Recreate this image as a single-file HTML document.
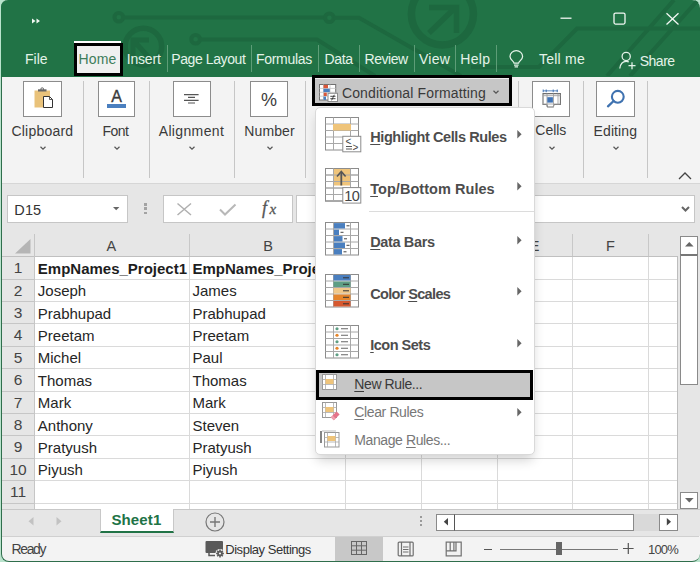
<!DOCTYPE html>
<html><head><meta charset="utf-8"><style>
html,body{margin:0;padding:0;}
body{width:700px;height:562px;overflow:hidden;position:relative;background:#b9e3cc;font-family:"Liberation Sans", sans-serif;}
.t{position:absolute;white-space:pre;font-family:"Liberation Sans", sans-serif;}
.b{position:absolute;box-sizing:border-box;}
svg.b{overflow:visible;}
</style></head><body>
<div class="b" style="left:1px;top:0px;width:699px;height:562px;background:#f3f3f3;border-radius:7px 8px 8px 8px;border-left:1px solid #2f6e4c;border-bottom:1.5px solid #2f6e4c;"></div>
<div class="b" style="left:1px;top:0px;width:699px;height:76.5px;background:#217346;border-radius:7px 8px 0 0;overflow:hidden;"></div>
<svg class="b" style="left:1px;top:0px;overflow:hidden;border-top-right-radius:7px;" width="699" height="76" viewBox="0 0 699 76">
<g fill="none" stroke="#1d683f" stroke-width="4" stroke-linecap="butt">
<circle cx="117.8" cy="17.3" r="4.3"/>
<path d="M122 17.5 H324"/>
<circle cx="328.4" cy="17.8" r="4.3"/>
<path d="M332.6 17.8 H358 L460 76"/>
<circle cx="194.6" cy="39.3" r="4.3"/>
<path d="M198.8 39.5 H316 L374 76"/>
<circle cx="142.4" cy="46.6" r="18.3" stroke-width="5.5"/>
<path d="M151 61 L133 41 M132 56 V40 H148" stroke-width="5"/>
<circle cx="441.4" cy="14" r="31" stroke-width="7.5"/>
<path d="M428 33 L455 7 M428 7.5 H455.5 V33" stroke-width="5.5"/>
<path d="M470 67 H538 L576 28.5 H699 M606 76 L673 0 M629 76 L697 0" />
</g>
</svg>
<svg class="b" style="left:555px;top:10px;" width="140" height="20" viewBox="0 0 140 20">
<g fill="none" stroke="#f2f7f3" stroke-width="1.3">
<path d="M5.5 8.2 H16.5"/>
<rect x="59" y="3.1" width="11" height="11" rx="1.5"/>
<path d="M111.5 3.2 L123.5 14.5 M123.5 3.2 L111.5 14.5"/>
</g></svg>
<svg class="b" style="left:30px;top:17px;" width="12" height="8" viewBox="0 0 12 8"><path d="M2 1.5 L5.5 4 L2 6.5Z M6.5 1.5 L10 4 L6.5 6.5Z" fill="#f2f7f3"/></svg>
<div class="t" style="left:25.00px;top:51.95px;font-size:14px;line-height:14px;color:#e4f3e9;font-weight:400;letter-spacing:-0.016px;">File</div>
<div class="b" style="left:74px;top:41px;width:47px;height:1.6px;background:#ffffff;"></div>
<div class="b" style="left:74px;top:43px;width:48.7px;height:33px;background:#f0f0f0;border:3px solid #000;"></div>
<div class="t" style="left:78.50px;top:51.95px;font-size:14px;line-height:14px;color:#3e7d5b;font-weight:400;letter-spacing:0.160px;">Home</div>
<div class="t" style="left:126.80px;top:51.95px;font-size:14px;line-height:14px;color:#e4f3e9;font-weight:400;letter-spacing:-0.203px;">Insert</div>
<div class="b" style="left:166.6px;top:45px;width:1px;height:27px;background:#5d9d77;"></div>
<div class="b" style="left:250.6px;top:45px;width:1px;height:27px;background:#5d9d77;"></div>
<div class="b" style="left:318px;top:45px;width:1px;height:27px;background:#5d9d77;"></div>
<div class="b" style="left:359.2px;top:45px;width:1px;height:27px;background:#5d9d77;"></div>
<div class="b" style="left:414px;top:45px;width:1px;height:27px;background:#5d9d77;"></div>
<div class="b" style="left:454.9px;top:45px;width:1px;height:27px;background:#5d9d77;"></div>
<div class="b" style="left:495.7px;top:45px;width:1px;height:27px;background:#5d9d77;"></div>
<div class="t" style="left:171.20px;top:51.95px;font-size:14px;line-height:14px;color:#e4f3e9;font-weight:400;letter-spacing:-0.393px;">Page Layout</div>
<div class="t" style="left:256.00px;top:51.95px;font-size:14px;line-height:14px;color:#e4f3e9;font-weight:400;letter-spacing:-0.295px;">Formulas</div>
<div class="t" style="left:324.50px;top:51.95px;font-size:14px;line-height:14px;color:#e4f3e9;font-weight:400;letter-spacing:-0.320px;">Data</div>
<div class="t" style="left:364.60px;top:51.95px;font-size:14px;line-height:14px;color:#e4f3e9;font-weight:400;letter-spacing:-0.484px;">Review</div>
<div class="t" style="left:419.00px;top:51.95px;font-size:14px;line-height:14px;color:#e4f3e9;font-weight:400;letter-spacing:0.227px;">View</div>
<div class="t" style="left:460.30px;top:51.95px;font-size:14px;line-height:14px;color:#e4f3e9;font-weight:400;letter-spacing:0.301px;">Help</div>
<svg class="b" style="left:509px;top:50px;" width="16" height="20" viewBox="0 0 16 20"><g fill="none" stroke="#e4f3e9" stroke-width="1.25">
<path d="M5 13 C4.6 11 1 9.5 1 6.5 C1 3.2 3.8 0.7 7.3 0.7 C10.8 0.7 13.6 3.2 13.6 6.5 C13.6 9.5 10 11 9.6 13 Z"/>
<path d="M5 15 H9.6 M5.6 16.8 H9"/></g></svg>
<div class="t" style="left:539.00px;top:51.95px;font-size:14px;line-height:14px;color:#e4f3e9;font-weight:400;letter-spacing:0.234px;">Tell me</div>
<svg class="b" style="left:619px;top:51px;" width="20" height="20" viewBox="0 0 20 20"><g fill="none" stroke="#e4f3e9" stroke-width="1.25">
<circle cx="7.2" cy="5.4" r="4.1"/>
<path d="M0.8 17.5 C1.3 13 3.6 10.3 7.2 10.3 C8.2 10.3 9 10.5 9.8 10.8"/>
<path d="M13 11.2 V18.2 M9.5 14.7 H16.5"/></g></svg>
<div class="t" style="left:639.70px;top:53.65px;font-size:14px;line-height:14px;color:#e4f3e9;font-weight:400;letter-spacing:-0.472px;">Share</div>
<div class="b" style="left:1px;top:76.5px;width:699px;height:106.5px;background:#f3f3f3;border-left:1px solid #2f6e4c;"></div>
<div class="b" style="left:2px;top:182.6px;width:698px;height:1px;background:#d6d6d6;"></div>
<div class="b" style="left:83.3px;top:81px;width:1px;height:97px;background:#c6c6c6;"></div>
<div class="b" style="left:148.9px;top:81px;width:1px;height:97px;background:#c6c6c6;"></div>
<div class="b" style="left:233.6px;top:81px;width:1px;height:97px;background:#c6c6c6;"></div>
<div class="b" style="left:304.6px;top:81px;width:1px;height:97px;background:#c6c6c6;"></div>
<div class="b" style="left:518.2px;top:81px;width:1px;height:97px;background:#c6c6c6;"></div>
<div class="b" style="left:582.8px;top:81px;width:1px;height:97px;background:#c6c6c6;"></div>
<div class="b" style="left:647.2px;top:81px;width:1px;height:97px;background:#c6c6c6;"></div>
<div class="b" style="left:23.3px;top:81.2px;width:38.6px;height:35.6px;background:#ffffff;border:1px solid #8c8c8c;"></div>
<div class="b" style="left:98px;top:81.2px;width:37.3px;height:35.6px;background:#ffffff;border:1px solid #8c8c8c;"></div>
<div class="b" style="left:173px;top:81.2px;width:37.9px;height:35.6px;background:#ffffff;border:1px solid #8c8c8c;"></div>
<div class="b" style="left:250.3px;top:81.2px;width:38.2px;height:35.6px;background:#ffffff;border:1px solid #8c8c8c;"></div>
<div class="b" style="left:532.3px;top:81.2px;width:37.9px;height:35.6px;background:#ffffff;border:1px solid #8c8c8c;"></div>
<div class="b" style="left:596.3px;top:81.2px;width:38.5px;height:35.6px;background:#ffffff;border:1px solid #8c8c8c;"></div>
<div class="t" style="left:11.40px;top:123.85px;font-size:14px;line-height:14px;color:#3a3a3a;font-weight:400;letter-spacing:0.229px;">Clipboard</div>
<div class="t" style="left:102.50px;top:123.85px;font-size:14px;line-height:14px;color:#3a3a3a;font-weight:400;letter-spacing:-0.504px;">Font</div>
<div class="t" style="left:158.70px;top:123.85px;font-size:14px;line-height:14px;color:#3a3a3a;font-weight:400;letter-spacing:0.359px;">Alignment</div>
<div class="t" style="left:244.30px;top:123.85px;font-size:14px;line-height:14px;color:#3a3a3a;font-weight:400;letter-spacing:0.117px;">Number</div>
<div class="t" style="left:535.30px;top:123.15px;font-size:14px;line-height:14px;color:#3a3a3a;font-weight:400;letter-spacing:-0.025px;">Cells</div>
<div class="t" style="left:593.60px;top:123.85px;font-size:14px;line-height:14px;color:#3a3a3a;font-weight:400;letter-spacing:0.098px;">Editing</div>
<svg class="b" style="left:40.0px;top:146px;" width="6" height="4" viewBox="0 0 6 4"><path d="M0.5 0.8 L3.0 3.2 L5.5 0.8" fill="none" stroke="#555" stroke-width="1.2"/></svg>
<svg class="b" style="left:114.0px;top:146px;" width="6" height="4" viewBox="0 0 6 4"><path d="M0.5 0.8 L3.0 3.2 L5.5 0.8" fill="none" stroke="#555" stroke-width="1.2"/></svg>
<svg class="b" style="left:188.5px;top:146px;" width="6" height="4" viewBox="0 0 6 4"><path d="M0.5 0.8 L3.0 3.2 L5.5 0.8" fill="none" stroke="#555" stroke-width="1.2"/></svg>
<svg class="b" style="left:266.5px;top:146px;" width="6" height="4" viewBox="0 0 6 4"><path d="M0.5 0.8 L3.0 3.2 L5.5 0.8" fill="none" stroke="#555" stroke-width="1.2"/></svg>
<svg class="b" style="left:548.5px;top:146px;" width="6" height="4" viewBox="0 0 6 4"><path d="M0.5 0.8 L3.0 3.2 L5.5 0.8" fill="none" stroke="#555" stroke-width="1.2"/></svg>
<svg class="b" style="left:612.5px;top:146px;" width="6" height="4" viewBox="0 0 6 4"><path d="M0.5 0.8 L3.0 3.2 L5.5 0.8" fill="none" stroke="#555" stroke-width="1.2"/></svg>
<svg class="b" style="left:678px;top:172px;" width="14" height="8" viewBox="0 0 14 8"><path d="M1 7 L7 1 L13 7" fill="none" stroke="#444" stroke-width="1.3"/></svg>
<svg class="b" style="left:33px;top:87px;" width="22" height="22" viewBox="0 0 22 22">
<path d="M1.5 3.5 H17 V20.5 H1.5 Z" fill="#e9c27a"/>
<path d="M5 2.3 H13.5 V4.5 H5Z" fill="#666"/>
<circle cx="9.2" cy="2.2" r="1.4" fill="none" stroke="#666" stroke-width="1"/>
<path d="M10.5 9.5 H16.5 L19.5 12.5 V20.5 H10.5 Z" fill="#fff" stroke="#333" stroke-width="1"/>
<path d="M16.5 9.5 V12.5 H19.5" fill="none" stroke="#333" stroke-width="0.8"/>
</svg>
<div class="t" style="left:111.20px;top:88.66px;font-size:16px;line-height:16px;color:#3a3a3a;font-weight:400;letter-spacing:0.828px;-webkit-text-stroke:0.35px #3a3a3a;">A</div>
<div class="b" style="left:107px;top:103.8px;width:19px;height:3.8px;background:#4a7fbf;"></div>
<svg class="b" style="left:184px;top:93px;" width="15" height="12" viewBox="0 0 15 12"><g stroke="#555" stroke-width="1.2"><path d="M0 1.6 H14.6 M4 4.4 H11 M0 7.3 H14.6 M4 10 H11"/></g></svg>
<div class="t" style="left:261.00px;top:90.76px;font-size:18px;line-height:18px;color:#3c3c3c;font-weight:400;letter-spacing:-0.516px;">%</div>
<svg class="b" style="left:541.5px;top:88px;" width="20" height="22" viewBox="0 0 20 22">
<path d="M1.2 2.8 H15.8" stroke="#4a7fbf" stroke-width="1.2" opacity="0.75"/>
<path d="M1.2 1.5 V4.2 M4.2 1.5 V4.2 M11.2 1.5 V4.2 M15.2 1.5 V4.2" stroke="#3d6fae" stroke-width="1"/>
<g fill="none" stroke="#6e6e6e" stroke-width="1.1">
<path d="M1 5.6 H18.4 V16.5 H12 L11.3 19 H5.6 L4.8 16.5 H1 Z"/>
</g>
<g fill="none" stroke="#a0a0a0" stroke-width="0.9">
<path d="M1 7.7 H18.4 M1 16 H18.4 M5 5.6 V19 M11.5 5.6 V19 M16 5.6 V16.5"/>
</g>
<rect x="5.3" y="9.2" width="5.6" height="5.4" fill="#3f73b5"/>
</svg>
<svg class="b" style="left:605px;top:87px;" width="22" height="22" viewBox="0 0 22 22">
<g fill="none" stroke="#3f72b0" stroke-width="2.1">
<circle cx="12.8" cy="9.8" r="5.9"/>
<path d="M8.6 14 L3 19.3" stroke-linecap="round" stroke-width="2.3"/>
</g></svg>
<div class="b" style="left:312px;top:75.2px;width:199.8px;height:30.8px;background:#c6c6c6;border:3px solid #000;"></div>
<div class="b" style="left:315px;top:78.2px;width:193.8px;height:1.3px;background:#ececec;"></div>
<div class="t" style="left:341.90px;top:85.75px;font-size:14px;line-height:14px;color:#3a3a3a;font-weight:400;letter-spacing:0.143px;">Conditional Formatting</div>
<svg class="b" style="left:493.0px;top:90.3px;" width="6" height="4" viewBox="0 0 6 4"><path d="M0.5 0.8 L3.0 3.2 L5.5 0.8" fill="none" stroke="#555" stroke-width="1.2"/></svg>
<svg class="b" style="left:319px;top:84px;" width="20" height="18" viewBox="0 0 20 18">
<rect x="0.5" y="0.5" width="16.2" height="15.5" fill="#fff" stroke="#707070" stroke-width="1"/>
<path d="M0.5 4.4 H16.7 M0.5 8.3 H16.7 M0.5 12.2 H16.7 M4.5 0.5 V16 M11 0.5 V16" stroke="#c4c4c4" stroke-width="0.8"/>
<rect x="4.5" y="0.9" width="4.5" height="3.3" fill="#d9583b"/>
<rect x="4.5" y="4.8" width="6.3" height="3.3" fill="#4a7fbf"/>
<rect x="4.8" y="8.7" width="3" height="3.3" fill="#d9583b"/>
<rect x="4.5" y="12.6" width="2.5" height="3.3" fill="#4a7fbf"/>
<rect x="9" y="9.3" width="9.5" height="8.2" fill="#fff" stroke="#8c8c8c" stroke-width="1"/>
<path d="M11.3 12.3 H16.5 M11.3 14.7 H16.5 M15.3 10.8 L12.6 16.3" stroke="#333" stroke-width="0.9"/>
</svg>
<div class="b" style="left:2px;top:183.6px;width:698px;height:52px;background:#e6e6e6;"></div>
<div class="b" style="left:7px;top:195px;width:120.5px;height:27.8px;background:#ffffff;border:1px solid #c6c6c6;"></div>
<div class="t" style="left:14.30px;top:203.13px;font-size:14.5px;line-height:14.5px;color:#333;font-weight:400;letter-spacing:0.130px;">D15</div>
<svg class="b" style="left:112.5px;top:207px;" width="7" height="4" viewBox="0 0 7 4"><path d="M0 0 H6.4 L3.2 3.2Z" fill="#666"/></svg>
<div class="b" style="left:144.2px;top:202.8px;width:3px;height:2.8px;background:#a3a3a3;"></div>
<div class="b" style="left:144.2px;top:207.2px;width:3px;height:2.8px;background:#a3a3a3;"></div>
<div class="b" style="left:144.2px;top:211.6px;width:3px;height:2.8px;background:#a3a3a3;"></div>
<div class="b" style="left:163.2px;top:195.2px;width:129.5px;height:27.8px;background:#ffffff;border:1px solid #c6c6c6;"></div>
<svg class="b" style="left:176px;top:202px;" width="17" height="14" viewBox="0 0 17 14"><path d="M1.5 1.5 L15 13 M15 1.5 L1.5 13" stroke="#b0b0b0" stroke-width="1.5" fill="none"/></svg>
<svg class="b" style="left:219px;top:203px;" width="18" height="13" viewBox="0 0 18 13"><path d="M1 6.5 L6 11.5 L16.5 1.5" stroke="#b8b8b8" stroke-width="2" fill="none"/></svg>
<div class="t" style="left:262.00px;top:199.06px;font-size:18px;line-height:18px;color:#555;font-weight:400;font-family:Liberation Serif, serif;font-style:italic;-webkit-text-stroke:0.3px #555;">f<span style="font-size:15px;margin-left:2.5px">x</span></div>
<div class="b" style="left:296px;top:195.4px;width:399px;height:27.6px;background:#ffffff;border:1px solid #c6c6c6;"></div>
<svg class="b" style="left:681px;top:206px;" width="9" height="6" viewBox="0 0 9 6"><path d="M1 1 L4.5 4.5 L8 1" stroke="#666" stroke-width="2" fill="none"/></svg>
<div class="b" style="left:2px;top:235px;width:678px;height:274px;background:#e6e6e6;"></div>
<div class="b" style="left:34.3px;top:256.4px;width:643.1px;height:253.2px;background:#ffffff;"></div>
<div class="b" style="left:2px;top:278.59999999999997px;width:32.3px;height:1px;background:#c6c6c6;"></div>
<div class="b" style="left:34.3px;top:278.59999999999997px;width:643.1px;height:1px;background:#dadada;"></div>
<div class="b" style="left:2px;top:301.0px;width:32.3px;height:1px;background:#c6c6c6;"></div>
<div class="b" style="left:34.3px;top:301.0px;width:643.1px;height:1px;background:#dadada;"></div>
<div class="b" style="left:2px;top:323.4px;width:32.3px;height:1px;background:#c6c6c6;"></div>
<div class="b" style="left:34.3px;top:323.4px;width:643.1px;height:1px;background:#dadada;"></div>
<div class="b" style="left:2px;top:345.79999999999995px;width:32.3px;height:1px;background:#c6c6c6;"></div>
<div class="b" style="left:34.3px;top:345.79999999999995px;width:643.1px;height:1px;background:#dadada;"></div>
<div class="b" style="left:2px;top:368.2px;width:32.3px;height:1px;background:#c6c6c6;"></div>
<div class="b" style="left:34.3px;top:368.2px;width:643.1px;height:1px;background:#dadada;"></div>
<div class="b" style="left:2px;top:390.59999999999997px;width:32.3px;height:1px;background:#c6c6c6;"></div>
<div class="b" style="left:34.3px;top:390.59999999999997px;width:643.1px;height:1px;background:#dadada;"></div>
<div class="b" style="left:2px;top:413.0px;width:32.3px;height:1px;background:#c6c6c6;"></div>
<div class="b" style="left:34.3px;top:413.0px;width:643.1px;height:1px;background:#dadada;"></div>
<div class="b" style="left:2px;top:435.4px;width:32.3px;height:1px;background:#c6c6c6;"></div>
<div class="b" style="left:34.3px;top:435.4px;width:643.1px;height:1px;background:#dadada;"></div>
<div class="b" style="left:2px;top:457.79999999999995px;width:32.3px;height:1px;background:#c6c6c6;"></div>
<div class="b" style="left:34.3px;top:457.79999999999995px;width:643.1px;height:1px;background:#dadada;"></div>
<div class="b" style="left:2px;top:480.2px;width:32.3px;height:1px;background:#c6c6c6;"></div>
<div class="b" style="left:34.3px;top:480.2px;width:643.1px;height:1px;background:#dadada;"></div>
<div class="b" style="left:2px;top:502.59999999999997px;width:32.3px;height:1px;background:#c6c6c6;"></div>
<div class="b" style="left:34.3px;top:502.59999999999997px;width:643.1px;height:1px;background:#dadada;"></div>
<div class="b" style="left:2px;top:525.0px;width:32.3px;height:1px;background:#c6c6c6;"></div>
<div class="b" style="left:34.3px;top:525.0px;width:643.1px;height:1px;background:#dadada;"></div>
<div class="b" style="left:188.6px;top:256.4px;width:1px;height:253.2px;background:#dadada;"></div>
<div class="b" style="left:344.6px;top:256.4px;width:1px;height:253.2px;background:#dadada;"></div>
<div class="b" style="left:420.6px;top:256.4px;width:1px;height:253.2px;background:#dadada;"></div>
<div class="b" style="left:497px;top:256.4px;width:1px;height:253.2px;background:#dadada;"></div>
<div class="b" style="left:572.3px;top:256.4px;width:1px;height:253.2px;background:#dadada;"></div>
<div class="b" style="left:648.3px;top:256.4px;width:1px;height:253.2px;background:#dadada;"></div>
<div class="b" style="left:188.6px;top:234.2px;width:1px;height:22px;background:#c8c8c8;"></div>
<div class="b" style="left:344.6px;top:234.2px;width:1px;height:22px;background:#c8c8c8;"></div>
<div class="b" style="left:420.6px;top:234.2px;width:1px;height:22px;background:#c8c8c8;"></div>
<div class="b" style="left:497px;top:234.2px;width:1px;height:22px;background:#c8c8c8;"></div>
<div class="b" style="left:572.3px;top:234.2px;width:1px;height:22px;background:#c8c8c8;"></div>
<div class="b" style="left:648.3px;top:234.2px;width:1px;height:22px;background:#c8c8c8;"></div>
<div class="b" style="left:2px;top:256px;width:676px;height:1px;background:#c0c0c0;"></div>
<div class="b" style="left:34.3px;top:234.2px;width:1px;height:275px;background:#c6c6c6;"></div>
<div class="b" style="left:677px;top:256.4px;width:1px;height:253.2px;background:#bdbdbd;"></div>
<svg class="b" style="left:15px;top:238.5px;" width="16" height="15" viewBox="0 0 16 15"><path d="M15.5 0 V14.5 H0 Z" fill="#b5b5b5"/></svg>
<div class="t" style="left:34.3px;width:154.3px;text-align:center;top:238.53px;font-size:14.5px;line-height:14.5px;color:#444;">A</div>
<div class="t" style="left:190.2px;width:156.0px;text-align:center;top:238.53px;font-size:14.5px;line-height:14.5px;color:#444;">B</div>
<div class="t" style="left:344.6px;width:76.39999999999998px;text-align:center;top:238.53px;font-size:14.5px;line-height:14.5px;color:#444;">C</div>
<div class="t" style="left:421px;width:76px;text-align:center;top:238.53px;font-size:14.5px;line-height:14.5px;color:#444;">D</div>
<div class="t" style="left:497px;width:75.29999999999995px;text-align:center;top:238.53px;font-size:14.5px;line-height:14.5px;color:#444;">E</div>
<div class="t" style="left:572.3px;width:76.30000000000007px;text-align:center;top:238.53px;font-size:14.5px;line-height:14.5px;color:#444;">F</div>
<div class="t" style="left:2px;width:32px;text-align:center;top:260.28px;font-size:15.5px;line-height:15.5px;color:#444;">1</div>
<div class="t" style="left:2px;width:32px;text-align:center;top:282.68px;font-size:15.5px;line-height:15.5px;color:#444;">2</div>
<div class="t" style="left:2px;width:32px;text-align:center;top:305.08px;font-size:15.5px;line-height:15.5px;color:#444;">3</div>
<div class="t" style="left:2px;width:32px;text-align:center;top:327.48px;font-size:15.5px;line-height:15.5px;color:#444;">4</div>
<div class="t" style="left:2px;width:32px;text-align:center;top:349.88px;font-size:15.5px;line-height:15.5px;color:#444;">5</div>
<div class="t" style="left:2px;width:32px;text-align:center;top:372.28px;font-size:15.5px;line-height:15.5px;color:#444;">6</div>
<div class="t" style="left:2px;width:32px;text-align:center;top:394.68px;font-size:15.5px;line-height:15.5px;color:#444;">7</div>
<div class="t" style="left:2px;width:32px;text-align:center;top:417.08px;font-size:15.5px;line-height:15.5px;color:#444;">8</div>
<div class="t" style="left:2px;width:32px;text-align:center;top:439.48px;font-size:15.5px;line-height:15.5px;color:#444;">9</div>
<div class="t" style="left:2px;width:32px;text-align:center;top:461.88px;font-size:15.5px;line-height:15.5px;color:#444;">10</div>
<div class="t" style="left:2px;width:32px;text-align:center;top:484.28px;font-size:15.5px;line-height:15.5px;color:#444;">11</div>
<div class="t" style="left:37.80px;top:260.70px;font-size:15px;line-height:15px;color:#1e1e1e;font-weight:400;"><b>EmpNames_Project1</b></div>
<div class="t" style="left:192.50px;top:260.70px;font-size:15px;line-height:15px;color:#1e1e1e;font-weight:400;"><b>EmpNames_Project2</b></div>
<div class="t" style="left:37.80px;top:283.10px;font-size:15px;line-height:15px;color:#262626;font-weight:400;">Joseph</div>
<div class="t" style="left:192.50px;top:283.10px;font-size:15px;line-height:15px;color:#262626;font-weight:400;">James</div>
<div class="t" style="left:37.80px;top:305.50px;font-size:15px;line-height:15px;color:#262626;font-weight:400;">Prabhupad</div>
<div class="t" style="left:192.50px;top:305.50px;font-size:15px;line-height:15px;color:#262626;font-weight:400;">Prabhupad</div>
<div class="t" style="left:37.80px;top:327.90px;font-size:15px;line-height:15px;color:#262626;font-weight:400;">Preetam</div>
<div class="t" style="left:192.50px;top:327.90px;font-size:15px;line-height:15px;color:#262626;font-weight:400;">Preetam</div>
<div class="t" style="left:37.80px;top:350.30px;font-size:15px;line-height:15px;color:#262626;font-weight:400;">Michel</div>
<div class="t" style="left:192.50px;top:350.30px;font-size:15px;line-height:15px;color:#262626;font-weight:400;">Paul</div>
<div class="t" style="left:37.80px;top:372.70px;font-size:15px;line-height:15px;color:#262626;font-weight:400;">Thomas</div>
<div class="t" style="left:192.50px;top:372.70px;font-size:15px;line-height:15px;color:#262626;font-weight:400;">Thomas</div>
<div class="t" style="left:37.80px;top:395.10px;font-size:15px;line-height:15px;color:#262626;font-weight:400;">Mark</div>
<div class="t" style="left:192.50px;top:395.10px;font-size:15px;line-height:15px;color:#262626;font-weight:400;">Mark</div>
<div class="t" style="left:37.80px;top:417.50px;font-size:15px;line-height:15px;color:#262626;font-weight:400;">Anthony</div>
<div class="t" style="left:192.50px;top:417.50px;font-size:15px;line-height:15px;color:#262626;font-weight:400;">Steven</div>
<div class="t" style="left:37.80px;top:439.90px;font-size:15px;line-height:15px;color:#262626;font-weight:400;">Pratyush</div>
<div class="t" style="left:192.50px;top:439.90px;font-size:15px;line-height:15px;color:#262626;font-weight:400;">Pratyush</div>
<div class="t" style="left:37.80px;top:462.30px;font-size:15px;line-height:15px;color:#262626;font-weight:400;">Piyush</div>
<div class="t" style="left:192.50px;top:462.30px;font-size:15px;line-height:15px;color:#262626;font-weight:400;">Piyush</div>
<div class="b" style="left:680px;top:235px;width:20px;height:274px;background:#e6e6e6;"></div>
<div class="b" style="left:680.2px;top:236px;width:17.8px;height:18.5px;background:#fff;border:1px solid #8a8a8a;"></div>
<svg class="b" style="left:685px;top:241.8px;" width="9" height="5" viewBox="0 0 9 5"><path d="M0 4.6 L4.3 0 L8.6 4.6Z" fill="#666"/></svg>
<div class="b" style="left:680.2px;top:253.5px;width:17.8px;height:131px;background:#fff;border:1px solid #8a8a8a;border-top:2px solid #777;"></div>
<div class="b" style="left:680.2px;top:491.5px;width:17.8px;height:17.5px;background:#fff;border:1px solid #8a8a8a;"></div>
<svg class="b" style="left:685px;top:497.5px;" width="9" height="5" viewBox="0 0 9 5"><path d="M0 0 L4.3 4.6 L8.6 0Z" fill="#666"/></svg>
<div class="b" style="left:2px;top:508.7px;width:698px;height:27.5px;background:#e6e6e6;border-top:1px solid #c8c8c8;"></div>
<svg class="b" style="left:28px;top:517px;" width="6" height="9" viewBox="0 0 6 9"><path d="M5.5 0 V8.5 L0.5 4.25Z" fill="#c2c2c2"/></svg>
<svg class="b" style="left:56px;top:517px;" width="6" height="9" viewBox="0 0 6 9"><path d="M0.5 0 V8.5 L5.5 4.25Z" fill="#c2c2c2"/></svg>
<div class="b" style="left:100px;top:508.7px;width:74px;height:24.3px;background:#fff;border-left:1px solid #c8c8c8;border-right:1px solid #c8c8c8;border-bottom:2px solid #217346;"></div>
<div class="t" style="left:111.40px;top:511.90px;font-size:15px;line-height:15px;color:#217346;font-weight:700;letter-spacing:0.133px;">Sheet1</div>
<svg class="b" style="left:205px;top:512px;" width="20" height="20" viewBox="0 0 20 20"><circle cx="10" cy="10" r="9" fill="none" stroke="#777" stroke-width="1.2"/><path d="M10 5 V15 M5 10 H15" stroke="#777" stroke-width="1.4"/></svg>
<div class="b" style="left:419.8px;top:516px;width:1.8px;height:2px;background:#9a9a9a;"></div>
<div class="b" style="left:419.8px;top:520px;width:1.8px;height:2px;background:#9a9a9a;"></div>
<div class="b" style="left:419.8px;top:524px;width:1.8px;height:2px;background:#9a9a9a;"></div>
<div class="b" style="left:436px;top:513.6px;width:19px;height:17px;background:#fff;border:1px solid #8a8a8a;"></div>
<svg class="b" style="left:443px;top:518px;" width="6" height="8" viewBox="0 0 6 8"><path d="M5 0 V7.6 L0.8 3.8Z" fill="#444"/></svg>
<div class="b" style="left:634px;top:513.6px;width:25px;height:17px;background:#d9d9d9;"></div>
<div class="b" style="left:454px;top:513.6px;width:180px;height:17px;background:#fff;border:1px solid #8a8a8a;border-left:1px solid #555;"></div>
<div class="b" style="left:659px;top:513.6px;width:19px;height:17px;background:#fff;border:1px solid #8a8a8a;"></div>
<svg class="b" style="left:666px;top:518px;" width="6" height="8" viewBox="0 0 6 8"><path d="M0.8 0 V7.6 L5 3.8Z" fill="#444"/></svg>
<div class="b" style="left:2px;top:536.2px;width:697px;height:1px;background:#d0d0d0;"></div>
<div class="t" style="left:11.60px;top:542.15px;font-size:14px;line-height:14px;color:#444;font-weight:400;letter-spacing:-1.394px;">Ready</div>
<svg class="b" style="left:204.5px;top:540.5px;" width="21" height="17" viewBox="0 0 21 17"><rect x="0.5" y="0" width="17.5" height="12" rx="1" fill="#5a5a5a"/><path d="M4 12 V14.5 H10" stroke="#5a5a5a" stroke-width="1.5" fill="none"/>
<circle cx="15" cy="12.5" r="4.6" fill="#f3f3f3"/>
<g stroke="#5a5a5a" stroke-width="1.6"><path d="M15 8.6 V16.4 M11.1 12.5 H18.9 M12.2 9.7 L17.8 15.3 M17.8 9.7 L12.2 15.3"/></g>
<circle cx="15" cy="12.5" r="2.8" fill="#5a5a5a"/><circle cx="15" cy="12.5" r="1.1" fill="#f3f3f3"/></svg>
<div class="t" style="left:225.30px;top:542.60px;font-size:13px;line-height:13px;color:#333;font-weight:400;letter-spacing:-0.476px;">Display Settings</div>
<div class="b" style="left:335px;top:536.8px;width:47.5px;height:24.2px;background:#c8c8c8;"></div>
<svg class="b" style="left:351px;top:541px;" width="16" height="14" viewBox="0 0 16 14"><g fill="none" stroke="#666" stroke-width="1"><rect x="0.5" y="0.5" width="15" height="13"/><path d="M0.5 4.8 H15.5 M0.5 9.2 H15.5 M5.5 0.5 V13.5 M10.5 0.5 V13.5"/></g></svg>
<svg class="b" style="left:397px;top:540.5px;" width="18" height="16" viewBox="0 0 18 16"><g fill="none" stroke="#707070" stroke-width="1.2"><rect x="1.2" y="1.1" width="15" height="13.8" rx="1"/><path d="M4.5 1.1 V14.9 M13 1.1 V14.9"/><path d="M6 6 H11.5 M6 8.5 H11.5 M6 11 H11.5"/></g></svg>
<svg class="b" style="left:444.5px;top:540.5px;" width="18" height="16" viewBox="0 0 18 16"><g fill="none" stroke="#707070" stroke-width="1.2"><rect x="1.2" y="1.1" width="15" height="13.8"/><path d="M1.2 9.8 H11 V1.1 M5.2 1.1 V9.8 M8.9 1.1 V9.8"/></g></svg>
<div class="b" style="left:484px;top:549.2px;width:8px;height:1.2px;background:#555;"></div>
<div class="b" style="left:499.5px;top:549.2px;width:118px;height:1px;background:#777;"></div>
<div class="b" style="left:556px;top:542.2px;width:6px;height:13px;background:#666;"></div>
<svg class="b" style="left:622.5px;top:543px;" width="11" height="11" viewBox="0 0 11 11"><path d="M5.3 0 V11 M0 5.5 H10.6" stroke="#555" stroke-width="1.2"/></svg>
<div class="t" style="left:648.00px;top:542.80px;font-size:13px;line-height:13px;color:#444;font-weight:400;letter-spacing:-0.812px;">100%</div>
<div class="b" style="left:315.2px;top:106.5px;width:219.6px;height:348.8px;background:#fff;border:1px solid #d9d9d9;border-radius:5px;box-shadow:0 7px 12px -2px rgba(0,0,0,0.18);"></div>
<svg class="b" style="left:325px;top:117px;" width="38" height="36" viewBox="0 0 38 36"><rect x="0.5" y="0.5" width="33" height="32.5" fill="#fff" stroke="#8c8c8c" stroke-width="1"/><path d="M0.5 7.00 H33.5" stroke="#a8a8a8" stroke-width="1"/><path d="M0.5 13.50 H33.5" stroke="#a8a8a8" stroke-width="1"/><path d="M0.5 20.00 H33.5" stroke="#a8a8a8" stroke-width="1"/><path d="M0.5 26.50 H33.5" stroke="#a8a8a8" stroke-width="1"/><path d="M8.5 0.5 V33.0" stroke="#a8a8a8" stroke-width="1"/><path d="M25.5 0.5 V33.0" stroke="#a8a8a8" stroke-width="1"/>
<rect x="8" y="7" width="18" height="6.5" fill="#efc47a"/>
<rect x="17.8" y="19.3" width="18" height="15.5" fill="#fff" stroke="#8c8c8c" stroke-width="1"/>
<text x="20.5" y="27.5" font-size="10" fill="#444" font-family="Liberation Sans">&lt;</text>
<path d="M21 29.5 H27 M21 32 H27" stroke="#444" stroke-width="0.9"/>
<text x="27.5" y="33.5" font-size="10" fill="#444" font-family="Liberation Sans">&gt;</text>
</svg>
<div class="t" style="left:370.20px;top:130.43px;font-size:14.5px;line-height:14.5px;color:#4d4d4d;font-weight:700;letter-spacing:-0.406px;text-underline-offset:2px;"><u>H</u>ighlight Cells Rules</div>
<svg class="b" style="left:325px;top:168.4px;" width="38" height="36" viewBox="0 0 38 36"><rect x="0.5" y="0.5" width="33" height="32.5" fill="#fff" stroke="#8c8c8c" stroke-width="1"/><path d="M0.5 7.00 H33.5" stroke="#a8a8a8" stroke-width="1"/><path d="M0.5 13.50 H33.5" stroke="#a8a8a8" stroke-width="1"/><path d="M0.5 20.00 H33.5" stroke="#a8a8a8" stroke-width="1"/><path d="M0.5 26.50 H33.5" stroke="#a8a8a8" stroke-width="1"/><path d="M8.5 0.5 V33.0" stroke="#a8a8a8" stroke-width="1"/><path d="M25.5 0.5 V33.0" stroke="#a8a8a8" stroke-width="1"/>
<rect x="8.5" y="1" width="17" height="16.5" fill="#efc47a"/>
<rect x="0.5" y="0.5" width="33" height="32.5" fill="none" stroke="#8c8c8c" stroke-width="1"/><path d="M0.5 7.00 H33.5" stroke="#a8a8a8" stroke-width="1"/><path d="M0.5 13.50 H33.5" stroke="#a8a8a8" stroke-width="1"/><path d="M0.5 20.00 H33.5" stroke="#a8a8a8" stroke-width="1"/><path d="M0.5 26.50 H33.5" stroke="#a8a8a8" stroke-width="1"/><path d="M8.5 0.5 V33.0" stroke="#a8a8a8" stroke-width="1"/><path d="M25.5 0.5 V33.0" stroke="#a8a8a8" stroke-width="1"/>
<path d="M16.3 17.5 V4" fill="none" stroke="#555" stroke-width="1.8"/>
<path d="M12 8.5 L16.3 3.5 L20.6 8.5" fill="none" stroke="#555" stroke-width="1.6"/>
<rect x="17.8" y="19.6" width="18" height="15.5" fill="#fff" stroke="#8c8c8c" stroke-width="1"/>
<text x="19.3" y="33.2" font-size="14.5" fill="#444" font-family="Liberation Sans" letter-spacing="-0.5">10</text>
</svg>
<div class="t" style="left:370.20px;top:181.73px;font-size:14.5px;line-height:14.5px;color:#4d4d4d;font-weight:700;letter-spacing:0.045px;text-underline-offset:2px;"><u>T</u>op/Bottom Rules</div>
<div class="b" style="left:369px;top:211px;width:165px;height:1px;background:#dcdcdc;"></div>
<svg class="b" style="left:325px;top:222px;" width="38" height="36" viewBox="0 0 38 36"><rect x="0.5" y="0.5" width="33" height="32.5" fill="#fff" stroke="#8c8c8c" stroke-width="1"/><path d="M0.5 7.00 H33.5" stroke="#a8a8a8" stroke-width="1"/><path d="M0.5 13.50 H33.5" stroke="#a8a8a8" stroke-width="1"/><path d="M0.5 20.00 H33.5" stroke="#a8a8a8" stroke-width="1"/><path d="M0.5 26.50 H33.5" stroke="#a8a8a8" stroke-width="1"/><path d="M8.5 0.5 V33.0" stroke="#a8a8a8" stroke-width="1"/><path d="M25.5 0.5 V33.0" stroke="#a8a8a8" stroke-width="1"/><rect x="9" y="1.10" width="11" height="5.4" fill="#4a7fbf"/><path d="M21.5 3.80 H24.5" stroke="#444" stroke-width="1"/><rect x="9" y="7.60" width="5" height="5.4" fill="#4a7fbf"/><path d="M15.5 10.30 H18.5" stroke="#444" stroke-width="1"/><rect x="9" y="14.10" width="8.5" height="5.4" fill="#4a7fbf"/><path d="M19.0 16.80 H22.0" stroke="#444" stroke-width="1"/><rect x="9" y="20.60" width="11" height="5.4" fill="#4a7fbf"/><path d="M21.5 23.30 H24.5" stroke="#444" stroke-width="1"/><rect x="9" y="27.10" width="8" height="5.4" fill="#4a7fbf"/><path d="M18.5 29.80 H21.5" stroke="#444" stroke-width="1"/></svg>
<div class="t" style="left:370.20px;top:235.33px;font-size:14.5px;line-height:14.5px;color:#4d4d4d;font-weight:700;letter-spacing:-0.358px;text-underline-offset:2px;"><u>D</u>ata Bars</div>
<svg class="b" style="left:325px;top:273.7px;" width="38" height="36" viewBox="0 0 38 36"><rect x="0.5" y="0.5" width="33" height="32.5" fill="#fff" stroke="#8c8c8c" stroke-width="1"/><path d="M0.5 7.00 H33.5" stroke="#a8a8a8" stroke-width="1"/><path d="M0.5 13.50 H33.5" stroke="#a8a8a8" stroke-width="1"/><path d="M0.5 20.00 H33.5" stroke="#a8a8a8" stroke-width="1"/><path d="M0.5 26.50 H33.5" stroke="#a8a8a8" stroke-width="1"/><path d="M8.5 0.5 V33.0" stroke="#a8a8a8" stroke-width="1"/><path d="M25.5 0.5 V33.0" stroke="#a8a8a8" stroke-width="1"/><rect x="8.5" y="1.00" width="17" height="5.50" fill="#4a7fbf"/><path d="M18 3.80 H24" stroke="#333" stroke-width="1"/><rect x="8.5" y="7.50" width="17" height="5.50" fill="#5e9e84"/><path d="M18 10.30 H24" stroke="#333" stroke-width="1"/><rect x="8.5" y="14.00" width="17" height="5.50" fill="#f0c889"/><path d="M18 16.80 H24" stroke="#333" stroke-width="1"/><rect x="8.5" y="20.50" width="17" height="5.50" fill="#e5852b"/><path d="M18 23.30 H24" stroke="#333" stroke-width="1"/><rect x="8.5" y="27.00" width="17" height="5.50" fill="#d6582f"/><path d="M18 29.80 H24" stroke="#333" stroke-width="1"/></svg>
<div class="t" style="left:370.20px;top:286.53px;font-size:14.5px;line-height:14.5px;color:#4d4d4d;font-weight:700;letter-spacing:-0.655px;text-underline-offset:2px;">Color <u>S</u>cales</div>
<svg class="b" style="left:325px;top:325px;" width="38" height="36" viewBox="0 0 38 36"><rect x="0.5" y="0.5" width="33" height="32.5" fill="#fff" stroke="#8c8c8c" stroke-width="1"/><path d="M0.5 7.00 H33.5" stroke="#a8a8a8" stroke-width="1"/><path d="M0.5 13.50 H33.5" stroke="#a8a8a8" stroke-width="1"/><path d="M0.5 20.00 H33.5" stroke="#a8a8a8" stroke-width="1"/><path d="M0.5 26.50 H33.5" stroke="#a8a8a8" stroke-width="1"/><path d="M8.5 0.5 V33.0" stroke="#a8a8a8" stroke-width="1"/><path d="M25.5 0.5 V33.0" stroke="#a8a8a8" stroke-width="1"/><circle cx="12" cy="3.75" r="1.6" fill="#5e9e84"/><path d="M16 3.75 H23" stroke="#666" stroke-width="1"/><circle cx="12" cy="10.25" r="1.6" fill="#e5852b"/><path d="M16 10.25 H23" stroke="#666" stroke-width="1"/><circle cx="12" cy="16.75" r="1.6" fill="#5e9e84"/><path d="M16 16.75 H23" stroke="#666" stroke-width="1"/><circle cx="12" cy="23.25" r="1.6" fill="#e5852b"/><path d="M16 23.25 H23" stroke="#666" stroke-width="1"/><circle cx="12" cy="29.75" r="1.6" fill="#5e9e84"/><path d="M16 29.75 H23" stroke="#666" stroke-width="1"/></svg>
<div class="t" style="left:370.20px;top:338.13px;font-size:14.5px;line-height:14.5px;color:#4d4d4d;font-weight:700;letter-spacing:-0.497px;text-underline-offset:2px;"><u>I</u>con Sets</div>
<svg class="b" style="left:516.5px;top:130.29999999999998px;" width="5" height="9" viewBox="0 0 5 9"><path d="M0.3 0 V8.6 L4.6 4.3Z" fill="#666"/></svg>
<svg class="b" style="left:516.5px;top:181.7px;" width="5" height="9" viewBox="0 0 5 9"><path d="M0.3 0 V8.6 L4.6 4.3Z" fill="#666"/></svg>
<svg class="b" style="left:516.5px;top:235.7px;" width="5" height="9" viewBox="0 0 5 9"><path d="M0.3 0 V8.6 L4.6 4.3Z" fill="#666"/></svg>
<svg class="b" style="left:516.5px;top:287.2px;" width="5" height="9" viewBox="0 0 5 9"><path d="M0.3 0 V8.6 L4.6 4.3Z" fill="#666"/></svg>
<svg class="b" style="left:516.5px;top:338.7px;" width="5" height="9" viewBox="0 0 5 9"><path d="M0.3 0 V8.6 L4.6 4.3Z" fill="#666"/></svg>
<svg class="b" style="left:516.5px;top:407.7px;" width="5" height="9" viewBox="0 0 5 9"><path d="M0.3 0 V8.6 L4.6 4.3Z" fill="#666"/></svg>
<div class="b" style="left:316.4px;top:369.8px;width:217px;height:30.5px;background:#c6c6c6;border:3px solid #000;"></div>
<svg class="b" style="left:321.8px;top:374px;" width="16" height="17" viewBox="0 0 16 17"><rect x="0.5" y="0.5" width="14" height="15" fill="#fff" stroke="#999" stroke-width="1"/><path d="M0.5 5.5 H14.5 M0.5 10.5 H14.5 M3.5 0.5 V15.5 M11.5 0.5 V15.5" stroke="#aaa" stroke-width="0.8"/><rect x="3.5" y="5" width="8" height="5" fill="#efc47a"/></svg>
<div class="t" style="left:354.30px;top:376.95px;font-size:14px;line-height:14px;color:#3a3a3a;font-weight:400;letter-spacing:-0.398px;text-underline-offset:2px;"><u>N</u>ew Rule...</div>
<svg class="b" style="left:321.8px;top:402px;" width="20" height="18" viewBox="0 0 20 18"><rect x="0.5" y="0.5" width="14" height="15" fill="#fff" stroke="#999" stroke-width="1"/><path d="M0.5 5.5 H14.5 M0.5 10.5 H14.5 M3.5 0.5 V15.5 M11.5 0.5 V15.5" stroke="#aaa" stroke-width="0.8"/><rect x="3.5" y="5" width="8" height="5" fill="#efc47a"/><path d="M8.8 15.2 L14.6 9.4 L17.6 12.4 L11.8 18.2 Z" fill="#e5738a"/><path d="M8.8 15.2 L10.6 13.4 L13.6 16.4 L11.8 18.2 Z" fill="#f0a0b0"/></svg>
<div class="t" style="left:354.30px;top:405.45px;font-size:14px;line-height:14px;color:#777;font-weight:400;letter-spacing:-0.378px;text-underline-offset:2px;"><u>C</u>lear Rules</div>
<svg class="b" style="left:320.3px;top:429.5px;" width="20" height="18" viewBox="0 0 20 18"><path d="M1 1 V13" stroke="#666" stroke-width="1.6"/><path d="M2 1 H16" stroke="#bbb" stroke-width="1"/><rect x="4.5" y="2.5" width="14.5" height="14.5" fill="#fff" stroke="#999" stroke-width="1"/><path d="M4.5 7.5 H19 M4.5 12 H19 M7.5 2.5 V17 M15.5 2.5 V17" stroke="#aaa" stroke-width="0.8"/><rect x="7.5" y="6" width="8" height="5" fill="#efc47a"/></svg>
<div class="t" style="left:354.30px;top:433.35px;font-size:14px;line-height:14px;color:#777;font-weight:400;letter-spacing:-0.398px;text-underline-offset:2px;">Manage <u>R</u>ules...</div>
</body></html>
